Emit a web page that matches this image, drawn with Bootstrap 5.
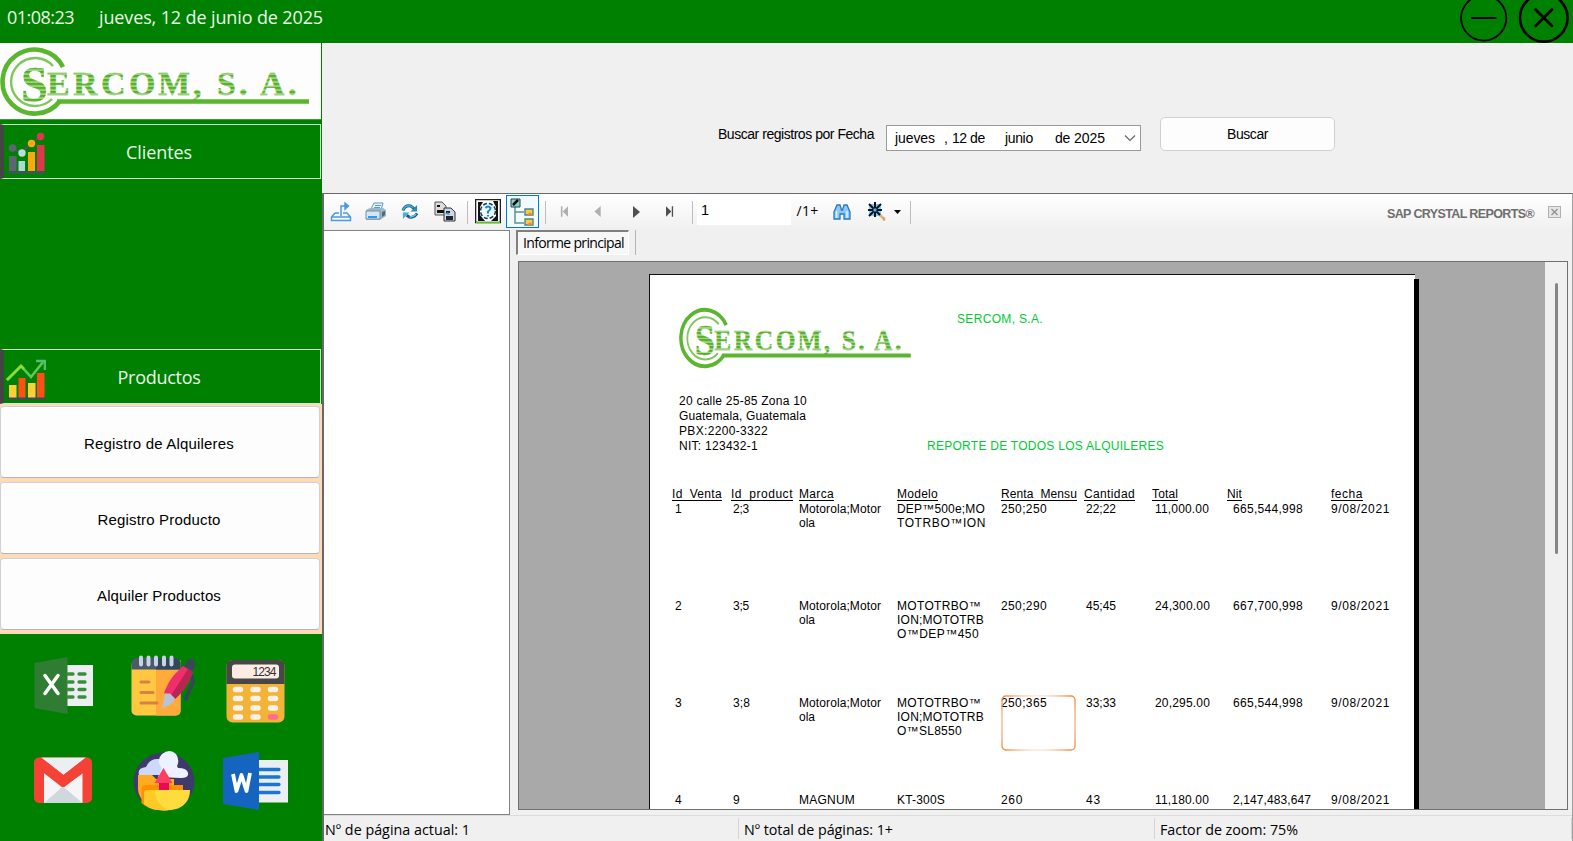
<!DOCTYPE html>
<html lang="es">
<head>
<meta charset="utf-8">
<title>Sercom, S. A. - Reporte de alquileres</title>
<link rel="stylesheet" href="https://cdn.jsdelivr.net/npm/bootstrap@5.3.0/dist/css/bootstrap.min.css">
<style>
body{font-family:"Liberation Sans",Arial,sans-serif;background:#f0f0f0;color:#000;line-height:1.2}
svg{display:block;flex:none}
[data-w]{display:inline-block;white-space:nowrap}
.segoe{font-family:"Open Sans","Noto Sans",sans-serif}
.topbar{height:43px;background:#008000;color:#e9f7e9;font-size:18px;padding:0 0 0 7px}
.topbar .clock{padding-top:6px;gap:25px}
.side{width:322px;background:#008000;flex:none}
.brand{height:77px;width:321px;background:#fdfdfd;border-bottom:1px solid #3b9c3b}
.menu-btn{height:55px;width:321px;border:1px solid #cfeacf;border-left:4px solid #444;color:#e9f7e9;font-size:18px;position:relative}
.menu-btn span{padding-top:2px;margin-right:2px}
.menu-btn svg{position:absolute;left:2px;top:7px}
.sub{background:#ffdab9;height:230px;padding:2px 2px 0 0;gap:4px}
.sub-btn{height:72px;width:320px;background:#fdfdfd;border:1px solid #d0d0d8;border-bottom-color:#b4b4bc;border-radius:4px;font-size:15px;line-height:73px;text-align:center;padding:0 2px 0 0}
.apps{display:grid;grid-template-columns:97px 94px 94px;grid-template-rows:95px 95px;padding:4px 0 0 16px}
.search{height:150px;padding:74px 0 0 396px;font-size:14px}
.date{width:255px;height:26px;border:1px solid #9a9a9a;background:#fff;margin:8px 19px 0 12px;padding:0 4px 0 8px}
.go{width:175px;height:34px;background:#fdfdfd;border:1px solid #d0d0d0;border-radius:5px;font-size:14px;padding:0}
.viewer{border-left:2px solid #696969;border-top:1px solid #696969;border-right:1px solid #a0a0a0}
.tools{height:36px;background:linear-gradient(#fff,#f0f0f0)}
.cell{display:flex;align-items:center;justify-content:center;height:35px;flex:none}
.sep{display:flex;align-items:center;justify-content:center;flex:none}
.sep::before{content:"";width:1px;height:23px;background:#bdbdbd}
.tree-on{width:33px;height:33px;border:1px solid #0078d7;background:#f2f9ff;margin:1px 1px 0 1px;flex:none}
.pageno{width:94px;height:28px;background:#fff;font-size:14.5px;padding:5px 0 0 4px}
.sap{color:#6e6e6e;font-size:12.5px;font-weight:bold;margin-right:14px;padding-top:4px}
.groups{width:186px;height:585px;background:#fff;border:1px solid #828282;border-left:0;flex:none}
.tab-on{width:113px;height:25px;background:#f7f7f7;border:1px solid #fff;border-top:2px solid #808080;border-left:2px solid #808080;font-size:14px;padding:3px 0 0 5px}
.tab-end{width:7px;height:25px;border-right:1px solid #b4b4b4}
.canvas{height:549px;margin:6px 4px 0 8px;border:1px solid #707070;background:#a9a9a9;overflow:hidden}
.sheet{width:766px;height:600px;margin:12px 0 0 130px;background:#fff;border:1px solid #111;border-right:0;position:relative;font-size:12px;flex:none}
.sheet::after{content:"";position:absolute;left:764px;top:4px;width:5px;height:600px;background:#000}
.scroll{width:22px;background:#f0f0f0;padding:21px 0 0 10px}
.thumb{width:3px;height:271px;background:#868686;border-radius:2px}
.green{color:#00cc33}
.head{height:205px;padding:29px 0 0 29px}
.addr{line-height:15px}
.rep{display:grid;grid-template-columns:59px 68px 98px 104px 83px 68px 75px 104px 70px;padding-left:22px}
.rep.titles{height:18px;line-height:13px}
.rep.titles u{text-decoration:none;border-bottom:1px solid #000;height:13px}
.rep.line{height:97.1px;line-height:14px}
.rep.line>div:nth-child(1){padding-left:3px}
.rep.line>div:nth-child(2){padding-left:2px}
.rep.line>div:nth-child(6){padding-left:2px}
.rep.line>div:nth-child(7){padding-left:3px}
.rep.line>div:nth-child(8){padding-left:6px}
.hot{position:absolute;left:0;top:-1px;width:75px;height:56px}
.status{height:24px;border-top:1px solid #dcdcdc;font-size:14.3px;background:#f0f0f0}
.status>div{border-right:1px solid #d4d4d4;margin-top:2px;padding:3px 0 0 5px}
</style>
<script src="https://cdn.jsdelivr.net/npm/bootstrap@5.3.0/dist/js/bootstrap.bundle.min.js"></script>
</head>
<body class="overflow-hidden">
<svg width="0" height="0" class="position-absolute">
  <defs>
    <linearGradient id="stripe" gradientUnits="userSpaceOnUse" x1="0" y1="0" x2="0" y2="4" spreadMethod="repeat">
      <stop offset="0" stop-color="#52ad28"/><stop offset=".5" stop-color="#5fb637"/><stop offset=".7" stop-color="#a9d88c"/><stop offset="1" stop-color="#96cf76"/>
    </linearGradient>
    <symbol id="logo" viewBox="0 0 320 76" preserveAspectRatio="none">
      <g fill="none" stroke="#5ab52f">
        <path d="M63 24A32 32 0 1 0 60 58" stroke-width="4.6"/>
        <path d="M53 23A24 24 0 1 0 52 56" stroke-width="2.4" stroke="#7fc65b"/>
        <path d="M57 58.500H309" stroke-width="4.600"/>
      </g>
      <g fill="url(#stripe)" stroke="url(#stripe)" stroke-width=".4" font-family="Liberation Serif" font-weight="bold">
        <text x="21" y="58" font-size="51" textLength="27" lengthAdjust="spacingAndGlyphs">S</text>
        <text y="52" font-size="34" x="47 73 101 129 158 193">ERCOM,</text>
        <text y="52" font-size="34" x="217 239">S.</text>
        <text y="52" font-size="34" x="260 288">A.</text>
      </g>
    </symbol>
  </defs>
</svg>
<div class="d-flex flex-column vh-100">
  <header class="topbar segoe d-flex justify-content-between flex-none overflow-hidden">
    <div class="clock d-flex lh-sm"><span data-w="67">01:08:23</span><span data-w="224">jueves, 12 de junio de 2025</span></div>
    <svg width="116" height="43" viewBox="1457 0 116 43" fill="none" stroke="#000" stroke-linecap="round">
      <circle cx="1483.700" cy="18" r="22.600" stroke-width="1.800"/><path d="M1472 18H1495.500" stroke-width="2"/>
      <circle cx="1543.800" cy="17.800" r="23.800" stroke-width="2.600"/><path d="M1535.500 9.500l16.500 16.500M1552 9.500l-16.500 16.500" stroke-width="2.800"/>
    </svg>
  </header>
  <div class="d-flex flex-grow-1">
    <aside class="side d-flex flex-column">
      <div class="brand"><svg width="320" height="76"><use href="#logo" width="320" height="76"/></svg></div>
      <div class="menu-btn segoe d-flex align-items-center justify-content-center pe-1 mt-1">
        <svg width="40" height="42" viewBox="0 0 40 42">
          <path d="M6 16l10 5 9-10 9-6" stroke="#4d5464" stroke-width="2" fill="none"/>
          <path d="M3 24h7.500v15H3z" fill="#5c6670"/><path d="M12.500 29H19v10h-6.500z" fill="#add8d8"/><path d="M22 20h7v19h-7z" fill="#ffa70f"/><path d="M31 13h7.500v26H31z" fill="#e2364f"/>
          <circle cx="6.500" cy="16" r="3.800" fill="#5c6670"/><circle cx="16" cy="21" r="3.700" fill="#b6dede"/><circle cx="25.500" cy="11.500" r="3.700" fill="#ffa70f"/><circle cx="34.500" cy="4.500" r="3.700" fill="#e2364f"/>
          <path d="M1 40.500h38" stroke="#4a4f68" stroke-width="1.800"/>
        </svg>
        <span data-w="66">Clientes</span>
      </div>
      <div style="height:170px"></div>
      <div class="menu-btn segoe d-flex align-items-center justify-content-center pe-1">
        <svg style="top:8px" width="40" height="42" viewBox="0 0 40 42">
          <path d="M1 22L15 8l10 11L37 4" stroke="#5cc75c" stroke-width="2.600" fill="none"/><path d="M1 22L15 8l3 3" stroke="#8fdc30" stroke-width="2.600" fill="none"/><path d="M30 3h9v9" stroke="#4fc070" stroke-width="2.600" fill="none"/>
          <path d="M3 27h7.500v13H3zM22 25h7.500v15H22z" fill="#ffcf38"/><path d="M12.500 20H19.500v20h-7zM31 15h7.500v25H31z" fill="#ff4f12"/>
          <path d="M1 40.500h38" stroke="#3f4668" stroke-width="2"/>
        </svg>
        <span data-w="83">Productos</span>
      </div>
      <div class="sub d-flex flex-column">
        <button class="sub-btn"><span data-w="150">Registro de Alquileres</span></button>
        <button class="sub-btn"><span data-w="123">Registro Producto</span></button>
        <button class="sub-btn"><span data-w="124">Alquiler Productos</span></button>
      </div>
      <div class="apps">
        <svg width="97" height="95" viewBox="16 638 97 95">
          <path d="M66 665H93v41H66z" fill="#eceff1"/><path d="M34.500 663L67.500 657v57L34.500 708z" fill="#2e7d32"/>
          <path d="M68 674h5M79 674h6M68 682h5M79 682h6M68 689.500h5M79 689.500h6M68 697h5M79 697h6" stroke="#388e3c" stroke-width="3.300" stroke-linecap="round"/>
          <path d="M45 675.500l13 18M58 675.500l-13 18" stroke="#fff" stroke-width="3.500" stroke-linecap="round"/>
        </svg>
        <svg width="94" height="95" viewBox="113 638 94 95">
          <rect x="131.500" y="660" width="49" height="55.500" rx="5" fill="#ffc840"/><path d="M156 660h24.500v50.500q0 5-5 5H156z" fill="#ffab3c"/>
          <path d="M131.500 669.500V664q0-6 6-6h37q6 0 6 6v5.500z" fill="#4b5a69"/><path d="M156 658h18.500q6 0 6 6v5.500H156z" fill="#32475a"/>
          <path d="M141 657.500v7M148.500 657.500v7M156 657.500v7M164 657.500v7M171.500 657.500v7" stroke="#c9d2e6" stroke-width="4" stroke-linecap="round"/>
          <path d="M141 682h8M141 692.500h12M141 703h16" stroke="#d88049" stroke-width="3" stroke-linecap="round"/>
          <path d="M191 675l2.500 6-8 18" stroke="#32475a" stroke-width="3.500" fill="none" stroke-linecap="round"/>
          <path d="M183 668l5-8q7-3 7.500 4l-4 11z" fill="#3b4658"/><path d="M164 693q5-13 11-19l8-8 10 6-4 9q-5 10-14 18z" fill="#ee2f6b"/><path d="M170 697l18-28 5 3-4 9q-5 10-14 18z" fill="#ba2452"/><path d="M162 708.500l3-15 5 0 5 5-3 5z" fill="#b8c4d6"/>
        </svg>
        <svg width="94" height="95" viewBox="207 638 94 95">
          <rect x="226.500" y="660" width="58" height="62.500" rx="6" fill="#f3b338"/><path d="M226.500 684V666q0-6 6-6h46q6 0 6 6v18z" fill="#474747"/><rect x="232" y="664.500" width="47" height="14" rx="3" fill="#fdece4"/>
          <text x="252.500" y="676" font-family="Liberation Sans" font-size="12" fill="#333" textLength="24">1234</text>
          <g stroke="#fdf1e8" stroke-width="5.500" stroke-linecap="round"><path d="M235.500 689.500h5M253 689.500h5M270.500 689.500h5M235.500 698.500h5M253 698.500h5M270.500 698.500h5M235.500 708h5M253 708h5M270.500 708h5M235.500 717h5M253 717h5"/><path d="M270.500 717h5" stroke="#ff6d8d"/></g>
        </svg>
        <svg width="97" height="95" viewBox="16 733 97 95">
          <rect x="34" y="757.500" width="58" height="45.500" rx="5" fill="#f44336"/><path d="M44 773v30H82.500V773L63 788z" fill="#f5f5f5"/><path d="M44 803l19-16.500L82.500 803z" fill="#cfd8dc"/><path d="M41 757.500H86L63.500 775z" fill="#eceff1"/><path d="M36 759l5-1.500L63.500 775 86 757.500l5 2-8.500 14L63.500 787 44 773z" fill="#f44336"/>
        </svg>
        <svg width="94" height="95" viewBox="113 733 94 95">
          <ellipse cx="164" cy="781.500" rx="30.500" ry="29" fill="#3f3a6b"/>
          <path d="M138 775h14l4 4h18v20l-27 6q-9-8-9-16z" fill="#ffab22"/><path d="M141.500 803V789q0-4 4-4H183v8l-28 17q-8-2-13.500-7z" fill="#ff9100"/>
          <path d="M139 775q-2-7 7-8 4-9 13-8l12 16z" fill="#cdd8fb"/><path d="M158 777q4-8 3-10-5-7 1-13 8-6 14 0 4 6 1 12l1 2q9 0 10 5 1 5-7 5z" fill="#eef1ff"/>
          <path d="M159 780h10v11H159z" fill="#e8085c"/><path d="M163.500 768l9 15h-18z" fill="#ff3f62"/>
          <path d="M144 804V794q0-4 4-4h42q0 13-12 18.500-6 2-14 2-12 0-20-6.500z" fill="#ffdc3e"/><path d="M155 790h-7q-4 0-4 4v10q8 6.500 20 6.500 2 0 4-.2-13-7-13-20.300z" fill="#ffc928"/>
        </svg>
        <svg width="94" height="95" viewBox="207 733 94 95">
          <path d="M258 760h30v42.500H258z" fill="#eceff1"/><path d="M259 769.500h20M259 777h20M259 784.500h20M259 792.500h20" stroke="#1976d2" stroke-width="3.300" stroke-linecap="round"/><path d="M223 758l36-6v58l-36-6z" fill="#1565c0"/>
          <path d="M233 774l3.500 17L241.500 775l5 16L250 773" stroke="#fff" stroke-width="3.800" fill="none" stroke-linejoin="round"/>
        </svg>
      </div>
    </aside>
    <main class="d-flex flex-column flex-grow-1">
      <section class="search d-flex align-items-start">
        <span data-w="156" style="padding-top:9px">Buscar registros por Fecha</span>
        <div class="date d-flex align-items-center">
          <span data-w="40">jueves</span><span style="margin-left:9px">,</span><span class="ms-1" data-w="33">12 de</span><span data-w="28" style="margin-left:20px">junio</span><span data-w="50" style="margin-left:22px">de 2025</span>
          <svg class="ms-auto" width="12" height="8" viewBox="0 0 12 8"><path d="M1 1.500l5 5 5-5" stroke="#666" stroke-width="1.200" fill="none"/></svg>
        </div>
        <button class="go"><span data-w="41">Buscar</span></button>
      </section>
      <section class="viewer flex-grow-1">
        <div class="tools d-flex">
          <div class="cell" style="width:34px"><svg width="22" height="20" viewBox="0 0 22 20" fill="none" stroke="#4a9be0" stroke-width="1.500"><path d="M5 11L1.500 15v3.500h19V15L17 11h-4M5 11h4M2 15h18" /><path d="M11 14V4h6" /><path d="M15 1l3.500 3L15 7z" fill="#4a9be0"/></svg></div>
          <div class="cell" style="width:35px"><svg width="22" height="19" viewBox="0 0 22 19"><path d="M6 7L9 1h9l-2 7z" fill="#eef7ff" stroke="#5a93bd"/><path d="M10 3.500h6M9 5.500h6" stroke="#4a9be0"/><path d="M1 8l4-2h13l3 2v6l-6 4H1z" fill="#9db7c8"/><path d="M1 9h14v8H1z" fill="#d5e6f0" stroke="#6c91aa"/><path d="M3 14h9v2H3z" fill="#2f9be8"/><path d="M17 10l3-1v4l-3 2z" fill="#4d6a80"/></svg></div>
          <div class="cell" style="width:34px"><svg width="18" height="17" viewBox="0 0 19 18" fill="none"><path d="M2 8q2-6 8-5l4 3" stroke="#1e5878" stroke-width="3"/><path d="M2 8q2-6 8-5l3 2" stroke="#3cb4ec" stroke-width="1.500"/><path d="M17 2v7h-7z" fill="#2a8ab8"/><path d="M17 11q-3 5-8 4l-3-2" stroke="#1e5878" stroke-width="3"/><path d="M16 12q-3 3-7 3" stroke="#5cc8f4" stroke-width="1.500"/><path d="M2 17v-7h7z" fill="#49aede"/></svg></div>
          <div class="cell" style="width:36px"><svg width="22" height="21" viewBox="0 0 22 21"><path d="M1 1h7l4 4v9H1z" fill="#ddd" stroke="#555"/><path d="M3 4h3v2H3zM3 9h7v3H3z" fill="#111"/><path d="M10 7h7l4 4v9H10z" fill="#cfd8dd" stroke="#333"/><path d="M12 10h4v2h-4zM12 15h7v4h-7z" fill="#223"/><path d="M11 13l3-2 2 3z" fill="#2a9bd8"/></svg></div>
          <div class="sep" style="width:8px"></div>
          <div class="cell" style="width:34px"><svg width="26" height="25" viewBox="0 0 26 25"><path d="M.5.500h25v23H.500z" fill="#fff" stroke="#222" stroke-width="1.600"/><path d="M3 3h5l-3 5v8l5 6H3zM23 2h-5l3 6v9l-5 5h7z" fill="#111"/><circle cx="13" cy="12" r="7.500" fill="#eaf8ff" stroke="#173a4c" stroke-width="1.500" stroke-dasharray="4 2"/><path d="M10.500 9q2.500-3 5 0 0 2-2.500 3.500v2M13 16v1.500" stroke="#1580d0" stroke-width="2" fill="none"/><path d="M1 24h24" stroke="#7ee84a" stroke-width="1.500"/></svg></div>
          <div class="tree-on d-flex align-items-center justify-content-center"><svg width="25" height="28" viewBox="0 0 25 28"><path d="M5 9v16h9M5 14h9" stroke="#5f9191" fill="none" stroke-width="1.500"/><path d="M1 1h9v8H1z" fill="#7fd5d0" stroke="#244"/><path d="M3 7l5-5" stroke="#000" stroke-width="2.500"/><path d="M15 11h8v6h-8zM15 21h8v6h-8z" fill="#ffc64e" stroke="#4b8787" stroke-width="1.400"/><path d="M20 14l3 3h-6zM20 24l3 3h-6z" fill="#f08a28"/></svg></div>
          <div class="sep" style="width:11px"></div>
          <div class="cell" style="width:26px"><svg width="8" height="11" viewBox="0 0 9 12" fill="#b0b0b0"><path d="M1 0h1.800v12H1zM9 0v12L3 6z"/></svg></div>
          <div class="cell" style="width:41px"><svg width="7" height="11" viewBox="0 0 7 12"><path d="M7 0v12L0 6z" fill="#b0b0b0"/></svg></div>
          <div class="cell" style="width:36px"><svg width="7" height="12" viewBox="0 0 7 12"><path d="M0 0v12l7-6z" fill="#505050"/></svg></div>
          <div class="cell" style="width:32px"><svg width="8" height="11" viewBox="0 0 9 12" fill="#505050"><path d="M6.500 0H8v12H6.500zM0 0v12l6-6z"/></svg></div>
          <div class="sep" style="width:12px"></div>
          <div class="pageno" style="margin:3px 0 0 -1px">1</div>
          <div class="cell segoe" style="width:33px;font-size:14px"><span data-w="22">/1+</span></div>
          <div class="cell" style="width:36px"><svg width="18" height="16" viewBox="0 0 18 16"><path d="M1 15V8l3-7h3l1.500 5h1L11 1h3l3 7v7h-6v-5H7v5z" fill="#8ccaf5" stroke="#2b78bd" stroke-width="1.300"/><path d="M3.500 7v7M14 7v7" stroke="#d9f1ff" stroke-width="1.500"/></svg></div>
          <div class="cell" style="width:33px"><svg width="20" height="20" viewBox="0 0 20 20"><path d="M2 2h12v12H2z" fill="#7ccdf4"/><path d="M8 0v15M1 8h14M2 2l12 12M14 2L2 14" stroke="#07131c" stroke-width="2"/><path d="M6.500 6.500h3v3h-3z" fill="#5cb2df"/><path d="M13 13l5 5" stroke="#e9ae6d" stroke-width="2.500"/><path d="M17 15v4" stroke="#d69a5c"/></svg></div>
          <div class="cell" style="width:8px"><svg width="7" height="4" viewBox="0 0 7 4"><path d="M0 0h7L3.500 4z"/></svg></div>
          <div class="sep" style="width:19px"></div>
          <div class="d-flex align-items-center ms-auto" style="padding-right:7px"><span class="sap" data-w="147">SAP CRYSTAL REPORTS®</span>
            <svg class="me-1" width="13" height="12" viewBox="0 0 13 12"><rect x=".5" y=".5" width="12" height="11" fill="#e6e6e6" stroke="#b0b0b0"/><path d="M3.500 3l6 6M9.500 3l-6 6" stroke="#909090" stroke-width="1.300"/></svg></div>
        </div>
        <div class="d-flex">
          <div class="groups"></div>
          <div class="flex-grow-1">
            <div class="d-flex"><div class="tab-on segoe" style="margin-left:6px"><span data-w="101">Informe principal</span></div><div class="tab-end"></div></div>
            <div class="canvas d-flex justify-content-between">
              <div class="sheet">
                <div class="head d-flex">
                  <div style="width:248px"><svg width="240" height="67"><use href="#logo" width="240" height="67"/></svg>
                    <div class="addr" style="margin-top:23px"><span data-w="128">20 calle 25-85 Zona 10</span><br><span data-w="127">Guatemala, Guatemala</span><br><span data-w="89">PBX:2200-3322</span><br><span data-w="79">NIT: 123432-1</span></div>
                  </div>
                  <div class="green d-flex flex-column align-items-start" style="padding-top:8px;gap:113px"><span data-w="86" style="margin-left:30px">SERCOM, S.A.</span><span data-w="237">REPORTE DE TODOS LOS ALQUILERES</span></div>
                </div>
                <div class="rep titles" style="margin-top:8px">
                  <div><u data-w="50">Id_Venta</u></div><div><u data-w="62">Id_product</u></div><div><u data-w="35">Marca</u></div><div><u data-w="41">Modelo</u></div><div><u data-w="76">Renta_Mensu</u></div><div><u data-w="51">Cantidad</u></div><div><u data-w="26">Total</u></div><div><u data-w="15">Nit</u></div><div><u data-w="32">fecha</u></div>
                </div>
                <div id="rows" style="margin-top:-4px"></div>
              </div>
              <div class="scroll"><div class="thumb"></div></div>
            </div>
          </div>
        </div>
        <div class="status segoe d-flex"><div style="width:415px;padding-left:1px"><span data-w="145">Nº de página actual: 1</span></div><div style="width:416px"><span data-w="149">Nº total de páginas: 1+</span></div><div class="flex-grow-1"><span data-w="138">Factor de zoom: 75%</span></div></div>
      </section>
    </main>
  </div>
</div>
<script>
// each cell lists its lines as [text, width]
const rows = [
  [[['1',7]],[['2;3',16]],[['Motorola;Motor',82],['ola',16]],[['DEP™500e;MO',88],['TOTRBO™ION',89]],[['250;250',46]],[['22;22',30]],[['11,000.00',54]],[['665,544,998',70]],[['9/08/2021',59]]],
  [[['2',7]],[['3;5',16]],[['Motorola;Motor',82],['ola',16]],[['MOTOTRBO™',84],['ION;MOTOTRB',87],['O™DEP™450',82]],[['250;290',46]],[['45;45',30]],[['24,300.00',55]],[['667,700,998',70]],[['9/08/2021',59]]],
  [[['3',7]],[['3;8',17]],[['Motorola;Motor',82],['ola',16]],[['MOTOTRBO™',84],['ION;MOTOTRB',87],['O™SL8550',65]],[['250;365',46]],[['33;33',30]],[['20,295.00',55]],[['665,544,998',70]],[['9/08/2021',59]]],
  [[['4',7]],[['9',7]],[['MAGNUM',56]],[['KT-300S',48]],[['260',22]],[['43',15]],[['11,180.00',54]],[['2,147,483,647',78]],[['9/08/2021',59]]]
];
const hot = '<svg class="hot" viewBox="0 0 75 56"><defs><radialGradient id="glow" gradientUnits="userSpaceOnUse" cx="37" cy="28" r="46"><stop offset=".58" stop-color="#fdeadb"/><stop offset=".95" stop-color="#f28a3c"/></radialGradient></defs><rect x="1" y="1" width="73" height="54" rx="4" fill="none" stroke="url(#glow)" stroke-width="1.3"/></svg>';
document.getElementById('rows').innerHTML = rows.map((r, i) => '<div class="rep line">' + r.map((c, j) =>
  '<div class="position-relative">' + c.map(l => `<span data-w="${l[1]}">${l[0]}</span>`).join('<br>') + (i == 2 && j == 4 ? hot : '') + '</div>').join('') + '</div>').join('');
document.querySelectorAll('[data-w]').forEach(e => {
  const n = e.textContent.length, w = e.getBoundingClientRect().width;
  e.style.letterSpacing = ((e.dataset.w - w) / n) + 'px';
});
</script>
</body>
</html>
